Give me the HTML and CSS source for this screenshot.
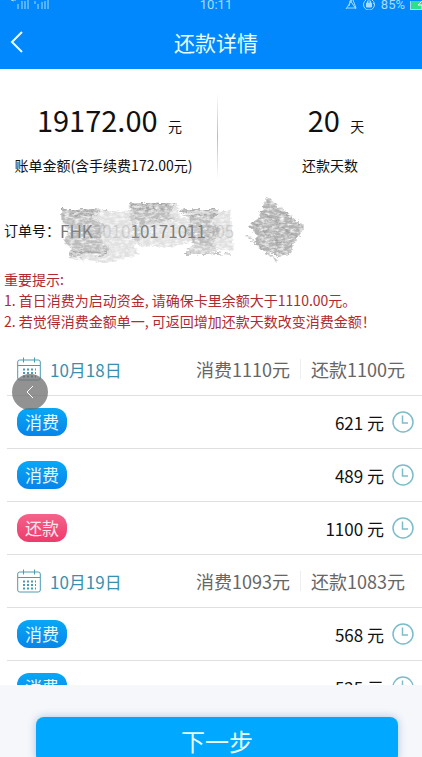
FILE: index.html
```html
<!DOCTYPE html>
<html lang="zh-CN">
<head>
  <meta charset="UTF-8" />
  <meta name="viewport" content="width=device-width, initial-scale=1.0"/>
  <title>还款详情</title>
  <link rel="stylesheet" href="styles.css">
</head>
<body>

  <svg class="sprite" aria-hidden="true">
    <symbol id="calendar" viewBox="0 0 24 24">
      <rect x="0.7" y="3" width="22.6" height="20" rx="2"/>
      <path d="M1 8.5h22M6.5 0.5v5M17.5 0.5v5"/>
      <path class="dots" d="M6 12.5h13M6 16h13M6 19.5h13"/>
    </symbol>
    <symbol id="clock" viewBox="0 0 22 22">
      <circle cx="11" cy="11" r="10"/>
      <path d="M10.5 4.5v7.5h5.5"/>
    </symbol>
  </svg>

  <header class="header">
    <div class="status">
      <svg class="signal" viewBox="0 0 40 10" aria-hidden="true">
        <path d="M1 0l3 1M5 0v1M8 4v5M12 1v8M15 1v8M18 0v9M25 1v3M28 4v5M32 2v7M35 1v8M38 0v9"/>
      </svg>
      <span class="time">10:11</span>
      <div class="status-right">
        <svg class="bell" viewBox="0 0 12 10" aria-hidden="true"><path d="M2 8h9L8 0M1 9L7 0M4 6l1-5M5 0l6 9"/></svg>
        <svg class="lock" viewBox="0 0 14 10" aria-hidden="true"><path d="M4 0a5.5 5.5 0 1 0 6 0M11 3l2 2"/><path class="solid" d="M4.5 3h5v4h-5z"/><path d="M5.5 3V1h3v2"/></svg>
        <span>85%</span>
        <svg class="battery" viewBox="0 0 12 9" aria-hidden="true"><rect x="0.5" y="-3" width="18" height="11.5"/><path class="bolt" d="M12 0l-4 4h4v4"/></svg>
      </div>
    </div>
    <div class="nav">
      <button class="back" aria-label="返回">
        <svg viewBox="0 0 14 22"><path d="M12 1L2 11l10 10"/></svg>
      </button>
      <h1>还款详情</h1>
    </div>
  </header>

  <main class="content">
    <section class="summary">
      <div class="figure">
        <p class="value">19172.00 <small>元</small></p>
        <p class="caption">账单金额(含手续费172.00元)</p>
      </div>
      <div class="figure">
        <p class="value">20 <small>天</small></p>
        <p class="caption">还款天数</p>
      </div>
    </section>

    <section class="order">
      <span>订单号：</span>
      <span class="order-no">FHK<span class="faint">2010</span>10171011<span class="faint">905</span></span>
      <svg class="scribble" viewBox="0 0 260 70" aria-hidden="true">
        <filter id="pencil" x="-5%" y="-5%" width="110%" height="110%">
          <feTurbulence type="fractalNoise" baseFrequency="0.2 0.4" numOctaves="3" seed="4" result="noise"/>
          <feDisplacementMap in="SourceGraphic" in2="noise" scale="6" xChannelSelector="R" yChannelSelector="G" result="rough"/>
          <feColorMatrix in="noise" values="0 0 0 0 0  0 0 0 0 0  0 0 0 0 0  2 0 0 0 -0.2" result="grain"/>
          <feComposite in="rough" in2="grain" operator="in"/>
          <feGaussianBlur stdDeviation="0.5"/>
        </filter>
        <g filter="url(#pencil)">
          <path class="light" d="M12 13l76 3-2 14 10 8-12 12 6 8-34 9-10-2-28-3 4-9-9-7 8-10-9-9z"/>
          <path class="light" d="M78 7l50 1 2 14 50-8 4 42-44-10-20 5-32-1-8-30z"/>
          <path class="mid" d="M12 13h34l-4 9 14 7-6 14 10 10-8 8-10-3-24 4 4-10-9-8 8-10-8-8zM79 7h46l-4 10 5 5-36 9zM130 13h40l-8 12 9 9-8 13 5 9-32 2 8-13-9-10 6-11z"/>
          <path class="mid" d="M216 2l38 29-6 11-4 5-4 11-12 2-20-8-2-13-7-9 10-9z"/>
          <path class="mid" d="M216 2l38 29-6 11-4 5-4 11-12 2-20-8-2-13-7-9 10-9z"/>
          <path class="line" d="M12 14h45M79 8h46M130 14h38M18 56h40M134 58h46M217 2l36 29M196 39l31 26M13 19h35M80 13h40M131 19h38M212 14l36 28M203 26l33 26"/>
        </g>
      </svg>
    </section>

    <section class="notice">
      <p>重要提示:</p>
      <p>1. 首日消费为启动资金, 请确保卡里余额大于1110.00元。</p>
      <p>2. 若觉得消费金额单一, 可返回增加还款天数改变消费金额！</p>
    </section>

    <ul class="plan">
      <li class="day">
        <svg class="calendar"><use href="#calendar"/></svg>
        <span class="date">10月18日</span>
        <span class="total">消费1110元</span>
        <span class="total">还款1100元</span>
      </li>
      <li class="item">
        <span class="tag">消费</span>
        <span class="amount">621 元</span>
        <svg class="clock"><use href="#clock"/></svg>
      </li>
      <li class="item">
        <span class="tag">消费</span>
        <span class="amount">489 元</span>
        <svg class="clock"><use href="#clock"/></svg>
      </li>
      <li class="item">
        <span class="tag repay">还款</span>
        <span class="amount">1100 元</span>
        <svg class="clock"><use href="#clock"/></svg>
      </li>
      <li class="day">
        <svg class="calendar"><use href="#calendar"/></svg>
        <span class="date">10月19日</span>
        <span class="total">消费1093元</span>
        <span class="total">还款1083元</span>
      </li>
      <li class="item">
        <span class="tag">消费</span>
        <span class="amount">568 元</span>
        <svg class="clock"><use href="#clock"/></svg>
      </li>
      <li class="item">
        <span class="tag">消费</span>
        <span class="amount">525 元</span>
        <svg class="clock"><use href="#clock"/></svg>
      </li>
    </ul>
  </main>

  <footer class="footer">
    <button class="next">下一步</button>
  </footer>

  <button class="float-back" aria-label="后退">
    <svg viewBox="0 0 8 14"><path d="M7 1L1 7l6 6"/></svg>
  </button>

</body>
</html>
```

FILE: styles.css
```css
* {
  box-sizing: border-box;
  margin: 0;
  padding: 0;
}

body {
  display: flex;
  flex-direction: column;
  height: 100vh;
  overflow: hidden;
  font-family: "Noto Sans CJK SC", sans-serif;
  background: #fff;
  color: #111;
}

button {
  border: none;
  background: none;
  color: inherit;
  font-family: inherit;
  cursor: pointer;
}

svg {
  display: block;
  flex: none;
  fill: none;
  stroke: currentColor;
}

.sprite {
  position: absolute;
  width: 0;
  height: 0;
}

/* header */
.header {
  flex: none;
  height: 69px;
  background: #0088fc;
  color: #e8fbff;
}

.status {
  display: grid;
  grid-template-columns: 1fr auto 1fr;
  align-items: center;
  height: 10px;
  padding-left: 10px;
  font-family: Roboto, sans-serif;
  font-size: 13px;
  line-height: 10px;
  color: #a9dcff;
}

.signal {
  width: 40px;
  height: 10px;
}

.status-right {
  display: flex;
  align-items: center;
  justify-content: flex-end;
  gap: 5px;
}

.bell {
  width: 12px;
  height: 10px;
}

.lock {
  width: 14px;
  height: 10px;
}

.lock .solid {
  fill: currentColor;
}

.battery {
  width: 12px;
  height: 9px;
}

.battery rect {
  fill: #2fe08a;
}

.battery .bolt {
  stroke: #fff;
}

.nav {
  display: grid;
  grid-template-columns: 40px 1fr 40px;
  align-items: center;
  height: 59px;
  padding: 4px 0 0 10px;
}

.back svg {
  width: 14px;
  height: 22px;
  stroke-width: 2;
}

.nav h1 {
  font-size: 21px;
  font-weight: 400;
  line-height: 32px;
  text-align: center;
}

/* bill summary */
.content {
  flex: 1;
  min-height: 0;
  overflow: hidden;
}

.summary {
  display: grid;
  grid-template-columns: 217px 1fr;
  padding: 25px 0 17px;
  text-align: center;
}

.figure {
  padding-right: 10px;
}

.figure + .figure {
  border-left: 1px solid;
  border-image: linear-gradient(#fff, #bbb 50%, #fff) 1;
  padding: 0 0 0 20px;
}

.value {
  padding-left: 12px;
  font-size: 29px;
  line-height: 50px;
}

.value small {
  margin-left: 4px;
  font-size: 14px;
}

.caption {
  font-size: 14px;
  line-height: 28px;
}

.order {
  display: flex;
  position: relative;
  align-items: center;
  height: 68px;
  padding-left: 4px;
  font-size: 14px;
}

.order-no {
  font-size: 17px;
  color: #777;
}

.faint {
  color: #ddd;
}

.scribble {
  position: absolute;
  top: 0;
  left: 50px;
  width: 260px;
  height: 70px;
  stroke: none;
}

.scribble .light {
  fill: #999;
  fill-opacity: 0.3;
}

.scribble .mid {
  fill: #888;
  fill-opacity: 0.4;
}

.scribble .line {
  stroke: #999;
  stroke-width: 2;
  stroke-opacity: 0.6;
}

.notice {
  padding: 5px 4px 11px;
  font-size: 14px;
  line-height: 21px;
  color: #b02a30;
}

/* repayment plan */
.plan {
  padding-left: 7px;
  list-style: none;
}

.plan li {
  display: flex;
  align-items: center;
  height: 53px;
  padding: 0 8px 0 10px;
  border-bottom: 1px solid #e0e0e0;
  font-size: 17px;
}

.calendar {
  width: 24px;
  height: 24px;
  margin-right: 9px;
  color: #4a9ab4;
}

.dots {
  stroke-width: 2;
  stroke-dasharray: 2 2;
}

.date {
  flex: 1;
  color: #3a8fae;
}

.plan .day {
  padding-right: 17px;
}

.total {
  font-size: 18px;
  line-height: 20px;
  color: #666;
}

.total + .total {
  margin-left: 10px;
  padding-left: 10px;
  border-left: 1px solid #eee;
}

.tag {
  width: 50px;
  border-radius: 12px;
  background: linear-gradient(#08a8f6, #0784ea);
  color: #e6f8ff;
  line-height: 28px;
  text-align: center;
}

.tag.repay {
  background: linear-gradient(#f4638a, #ee3a6c);
  color: #ffe6ee;
}

.amount {
  flex: 1;
  text-align: right;
}

.clock {
  width: 22px;
  height: 22px;
  margin-left: 8px;
  color: #7dbcc8;
  stroke-width: 1.5;
}

/* bottom action */
.footer {
  flex: none;
  height: 72px;
  padding: 32px 24px 0 36px;
  overflow: hidden;
  background: #f5f7fb;
}

.next {
  width: 100%;
  height: 46px;
  border-radius: 8px;
  background: #00a8ff;
  box-shadow: 0 0 8px rgba(0, 80, 160, 0.3);
  color: #e8fbff;
  font-size: 24px;
}

.float-back {
  display: flex;
  position: fixed;
  top: 374px;
  left: 12px;
  align-items: center;
  justify-content: center;
  width: 36px;
  height: 36px;
  border-radius: 50%;
  background: rgba(110, 110, 110, 0.75);
  color: #fff;
}

.float-back svg {
  width: 8px;
  height: 14px;
}
```
